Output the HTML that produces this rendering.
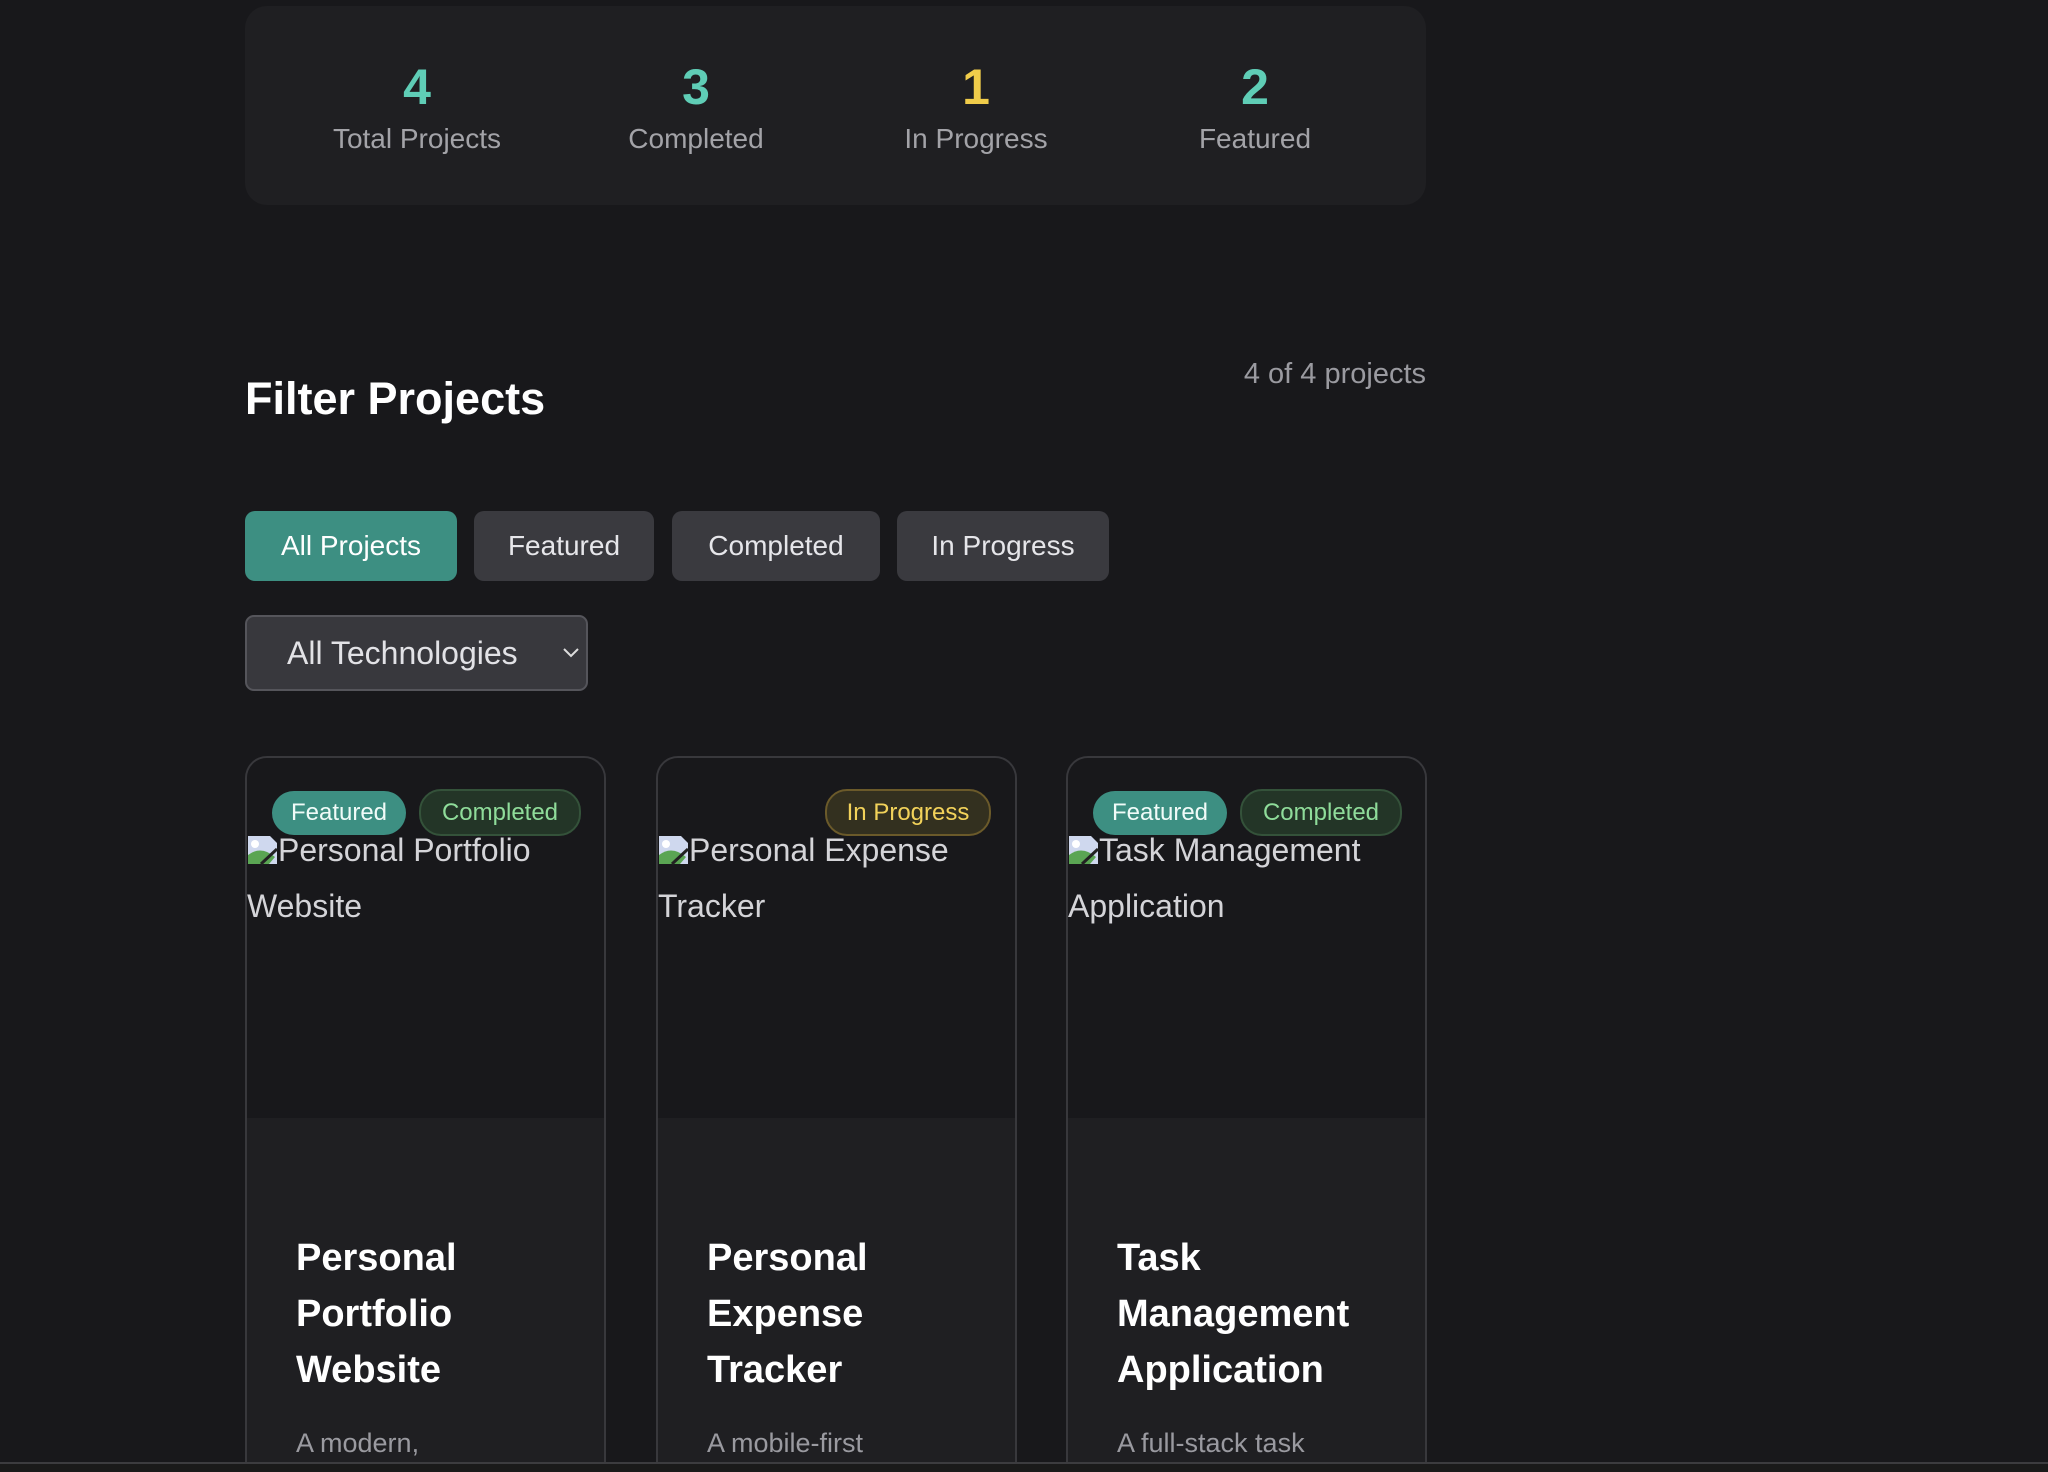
<!DOCTYPE html>
<html style="height:1472px;overflow:hidden"><head><meta charset="utf-8"><style>
*{box-sizing:border-box;margin:0;padding:0}
body{width:2048px;height:1472px;background:#18181b;font-family:"Liberation Sans",sans-serif;position:relative;overflow:hidden;color:#fff}
.abs{position:absolute}
.stats{left:245px;top:6px;width:1181px;height:199px;background:#1f1f22;border-radius:22px}
.stat{position:absolute;top:0;width:280px;text-align:center;margin-left:-140px}
.stat .n{position:absolute;top:52px;width:100%;font-size:50px;font-weight:bold;line-height:58px}
.stat .l{position:absolute;top:116px;width:100%;font-size:28px;color:#a3a3a8;line-height:34px}
h2{position:absolute;left:245px;top:371px;font-size:45px;font-weight:bold;line-height:56px}
.count{right:622px;top:356px;font-size:29px;color:#9a9aa0;line-height:36px}
.btn{position:absolute;top:511px;height:70px;border-radius:10px;background:#3a3a3f;color:#e6e6ea;font-size:28px;line-height:70px;text-align:center}
.sel{left:245px;top:615px;width:343px;height:76px;border:2px solid #55555b;border-radius:9px;background:#38383d;color:#e2e2e6;font-size:32px;line-height:72px;padding-left:40px}
.card{position:absolute;top:756px;width:361px;height:716px;border:2px solid #38383c;border-bottom:none;border-radius:22px 22px 0 0;overflow:hidden;background:#1f1f22}
.img{position:absolute;left:0;top:0;width:100%;height:360px;background:#18181b}
.badge{position:absolute;top:33px;height:44px;border-radius:22px;font-size:24px;line-height:44px;text-align:center}
.feat{background:#3d8f82;color:#f0fbf8}
.comp{background:#233527;color:#8fdc9a;border:2px solid #34523a;line-height:43px}
.prog{background:#33301f;color:#f2d25a;border:2px solid #6b5a2a;line-height:43px}
.alt{position:absolute;left:0;top:64px;width:300px;font-size:32px;line-height:56px;color:#d4d4d8}
.ico{display:inline-block;width:31px;height:30px;vertical-align:-4px;position:relative}
.title{position:absolute;left:49px;top:472px;font-size:38px;font-weight:bold;line-height:56px;width:280px}
.desc{position:absolute;left:49px;top:670px;font-size:27px;color:#9a9aa0}
.bottom{left:0;top:1462px;width:2048px;height:10px;background:#1a1a1a;border-top:2px solid #3c3c3f;z-index:5}
</style></head><body>
<div class="abs stats">
 <div class="stat" style="left:172px"><div class="n" style="color:#5fcdb6">4</div><div class="l">Total Projects</div></div>
 <div class="stat" style="left:451px"><div class="n" style="color:#5fcdb6">3</div><div class="l">Completed</div></div>
 <div class="stat" style="left:731px"><div class="n" style="color:#f0cc4a">1</div><div class="l">In Progress</div></div>
 <div class="stat" style="left:1010px"><div class="n" style="color:#5fcdb6">2</div><div class="l">Featured</div></div>
</div>
<h2>Filter Projects</h2>
<div class="abs count">4 of 4 projects</div>
<div class="btn" style="left:245px;width:212px;background:#3d8f82;color:#fff">All Projects</div>
<div class="btn" style="left:474px;width:180px">Featured</div>
<div class="btn" style="left:672px;width:208px">Completed</div>
<div class="btn" style="left:897px;width:212px">In Progress</div>
<div class="abs sel">All Technologies<svg style="position:absolute;right:6px;top:30px" width="18" height="12" viewBox="0 0 18 12"><path d="M2 2l7 7 7-7" fill="none" stroke="#ddd" stroke-width="2"/></svg></div>

<div class="card" style="left:245px"><div class="img"></div>
 <div class="badge feat" style="left:25px;width:134px;top:33px">Featured</div>
 <div class="badge comp" style="left:172px;width:162px;top:31px;height:47px">Completed</div>
 <div class="alt"><span class="ico"><svg width="31" height="30"><path d="M1 1h22l7 7v21H1z" fill="#cfd8ee"/><path d="M1 29 L1 20 Q14 10 28 22 L22 29z" fill="#5aa553"/><circle cx="8" cy="9" r="4" fill="#fff"/><path d="M14 29 L30 14" stroke="#222" stroke-width="3"/></svg></span>Personal Portfolio Website</div>
 <div class="title">Personal Portfolio Website</div>
 <div class="desc">A modern,</div>
</div>
<div class="card" style="left:656px"><div class="img"></div>
 <div class="badge prog" style="left:167px;width:166px;top:31px;height:47px">In Progress</div>
 <div class="alt"><span class="ico"><svg width="31" height="30"><path d="M1 1h22l7 7v21H1z" fill="#cfd8ee"/><path d="M1 29 L1 20 Q14 10 28 22 L22 29z" fill="#5aa553"/><circle cx="8" cy="9" r="4" fill="#fff"/><path d="M14 29 L30 14" stroke="#222" stroke-width="3"/></svg></span>Personal Expense Tracker</div>
 <div class="title">Personal Expense Tracker</div>
 <div class="desc">A mobile-first</div>
</div>
<div class="card" style="left:1066px"><div class="img"></div>
 <div class="badge feat" style="left:25px;width:134px;top:33px">Featured</div>
 <div class="badge comp" style="left:172px;width:162px;top:31px;height:47px">Completed</div>
 <div class="alt"><span class="ico"><svg width="31" height="30"><path d="M1 1h22l7 7v21H1z" fill="#cfd8ee"/><path d="M1 29 L1 20 Q14 10 28 22 L22 29z" fill="#5aa553"/><circle cx="8" cy="9" r="4" fill="#fff"/><path d="M14 29 L30 14" stroke="#222" stroke-width="3"/></svg></span>Task Management Application</div>
 <div class="title">Task Management Application</div>
 <div class="desc">A full-stack task</div>
</div>
<div class="abs bottom"></div>
</body></html>
